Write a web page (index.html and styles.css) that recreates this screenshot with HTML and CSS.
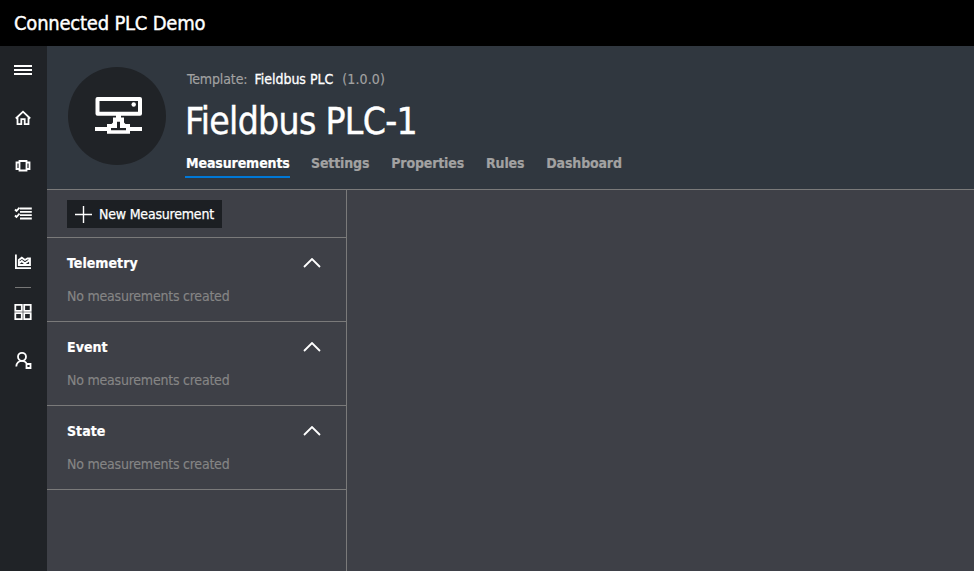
FILE: index.html
```html
<!DOCTYPE html>
<html lang="en">
<head>
<meta charset="utf-8">
<title>Connected PLC Demo</title>
<link rel="stylesheet" href="styles.css">
</head>
<body>
<header class="topbar"><span class="brand">Connected PLC Demo</span></header>
<div class="shell">
  <nav class="rail">
    <svg class="icon menu" viewBox="0 0 20 20"><path d="M1 6h18M1 10h18M1 14h18"/></svg>
    <svg class="icon home" viewBox="0 0 20 20"><path d="M2.800 10.500L10 3.700l7.200 6.800M4.500 9.500v6.700h3.800v-5h3.400v5h3.800v-6.700"/></svg>
    <svg class="icon device" viewBox="0 0 20 20"><path d="M6.500 5h7v9.500h-7zM6.500 6.500h-3v6.500h3M13.500 6.500h3v6.500h-3"/></svg>
    <svg class="icon list" viewBox="0 0 20 20"><path d="M7 4.500h11.800M7 7.800h11.800M7 11.200h11.800M7 14.500h11.800M2 5.500l1.500 1.500 3-3.300M2 11.500l1.500 1.500 3-3.300"/></svg>
    <svg class="icon chart" viewBox="0 0 20 20"><path d="M2.900 2.500v13.700H18M5.800 13v-5l3-2.300 3.200 2.300 2.500-1.500h2.500v6.500zM5.800 11.500l3-2.500 3 2.500 5-3.500"/></svg>
    <span class="divider"></span>
    <svg class="icon grid" viewBox="0 0 20 20"><path d="M2.300 2.800h6.500v6h-6.500zM11.200 2.800h6.500v6h-6.500zM2.300 11.200h6.500v6h-6.500zM11.200 11.200h6.500v6h-6.500z"/></svg>
    <svg class="icon user" viewBox="0 0 20 20"><path d="M3.300 16.500c0-3.500 2.500-5.700 5.700-5.700 2 0 3.500.8 4.500 2.300"/><circle cx="9" cy="6.800" r="4"/><path d="M13.500 14h4v4h-4z"/></svg>
  </nav>
  <main class="main">
    <section class="hero">
      <div class="avatar">
        <svg viewBox="0 0 48 38"><path class="thick" d="M2.500 3H45v14.800H2.500z"/><path class="solid" fill-rule="evenodd" d="M21 19h5v2.500h3v5l1.500 1.500H35v3h12v4H35v2.700H12V35H0v-4h12v-3h4.500l1.500-1.500v-5h3zM22 25.700V32H16v2.300H31V32h-6v-6.300z"/><circle cx="38.700" cy="8.500" r="2.200"/></svg>
      </div>
      <div class="info">
        <div class="template"><span class="label">Template:</span><span class="name">Fieldbus PLC</span><span class="version">(1.0.0)</span></div>
        <h1 class="title">Fieldbus PLC-1</h1>
        <div class="tabs">
          <span class="tab active">Measurements</span><span class="tab">Settings</span><span class="tab">Properties</span><span class="tab">Rules</span><span class="tab">Dashboard</span>
        </div>
      </div>
    </section>
    <div class="content">
      <aside class="panel">
        <div class="toolbar"><button class="new"><svg viewBox="0 0 17 17"><path d="M8.500 0v17M0 8.500h17"/></svg><span>New Measurement</span></button></div>
        <section class="group"><div class="head"><h2>Telemetry</h2><svg viewBox="0 0 18 10"><path d="M1 9l8-8 8 8"/></svg></div><p>No measurements created</p></section>
        <section class="group"><div class="head"><h2>Event</h2><svg viewBox="0 0 18 10"><path d="M1 9l8-8 8 8"/></svg></div><p>No measurements created</p></section>
        <section class="group"><div class="head"><h2>State</h2><svg viewBox="0 0 18 10"><path d="M1 9l8-8 8 8"/></svg></div><p>No measurements created</p></section>
      </aside>
      <div class="canvas"></div>
    </div>
  </main>
</div>
</body>
</html>
```

FILE: styles.css
```css
* { box-sizing: border-box; }
body { margin: 0; height: 100vh; display: flex; flex-direction: column; overflow: hidden; background: #3e4047; color: #fff; font-family: "DejaVu Sans Condensed", "DejaVu Sans", sans-serif; font-stretch: condensed; font-size: 14px; white-space: nowrap; }
svg { display: block; flex: none; fill: none; stroke: #fff; }
h1, h2, p { margin: 0; }
.topbar { height: 46px; flex: none; background: #000; padding-left: 14px; }
.brand { display: inline-block; font-size: 20px; line-height: 46px; letter-spacing: -0.22px; -webkit-text-stroke: 0.4px; }
.shell { flex: 1; display: flex; min-height: 0; }
.rail { width: 47px; flex: none; background: #202327; display: flex; flex-direction: column; align-items: flex-start; padding: 14px 0 0 13px; }
.icon { width: 20px; height: 20px; stroke-width: 1.8; margin-bottom: 28px; }
.chart { margin-bottom: 15px; }
.divider { width: 16px; height: 1px; background: #777; margin: 0 0 14px 2px; }
.main { flex: 1; display: flex; flex-direction: column; min-width: 0; }
.hero { height: 144px; flex: none; background: #30373f; border-bottom: 1px solid #7a7a7a; display: flex; padding: 21px 0 0 21px; }
.avatar { width: 98px; height: 98px; border-radius: 50%; background: #202327; display: flex; align-items: center; justify-content: center; }
.avatar svg { width: 48px; height: 38px; margin: 0 0 2px 4px; }
.thick { stroke-width: 4; stroke-linejoin: round; }
.solid { fill: #fff; stroke: none; }
.avatar circle { fill: #fff; stroke: none; }
.info { padding-left: 20px; }
.template { display: flex; height: 24px; line-height: 24px; margin-left: 1px; letter-spacing: -0.12px; color: #a2a2a2; -webkit-text-stroke: 0.15px; }
.name { color: #fff; margin: 0 9px 0 7px; letter-spacing: 0; -webkit-text-stroke: 0.3px; }
.version { letter-spacing: 0.1px; }
.title { font-weight: 400; font-size: 37px; line-height: 62px; height: 58px; letter-spacing: -0.7px; margin-left: -1px; -webkit-text-stroke: 0.4px; }
.tabs { display: flex; gap: 22px; margin-left: -1px; }
.tab { height: 29px; line-height: 28px; font-weight: 700; letter-spacing: -0.15px; color: #a2a2a2; -webkit-text-stroke: 0.2px; }
.active { width: 105px; margin-right: -1px; padding-left: 1px; letter-spacing: -0.1px; color: #fff; border-bottom: 2px solid #0078d7; }
.content { flex: 1; display: flex; }
.panel { width: 300px; border-right: 1px solid #7a7a7a; }
.toolbar { height: 48px; border-bottom: 1px solid #7a7a7a; padding: 10px 0 0 20px; }
.new { width: 155px; height: 28px; border: 0; padding: 0 0 0 8px; background: #1c1f23; color: #fff; display: flex; align-items: center; gap: 7px; font: inherit; letter-spacing: -0.2px; -webkit-text-stroke: 0.25px; }
.new svg { width: 17px; height: 17px; stroke-width: 1.4; margin-top: 1px; }
.group { height: 84px; border-bottom: 1px solid #7a7a7a; padding: 13px 25px 0 20px; }
.head { display: flex; justify-content: space-between; align-items: center; height: 24px; }
.head h2 { font-size: 14px; letter-spacing: 0.05px; -webkit-text-stroke: 0.2px; }
.head svg { width: 18px; height: 10px; stroke-width: 1.8; }
.group p { margin-top: 9px; line-height: 24px; letter-spacing: -0.22px; color: #858585; -webkit-text-stroke: 0.15px; }
.canvas { flex: 1; }
```
